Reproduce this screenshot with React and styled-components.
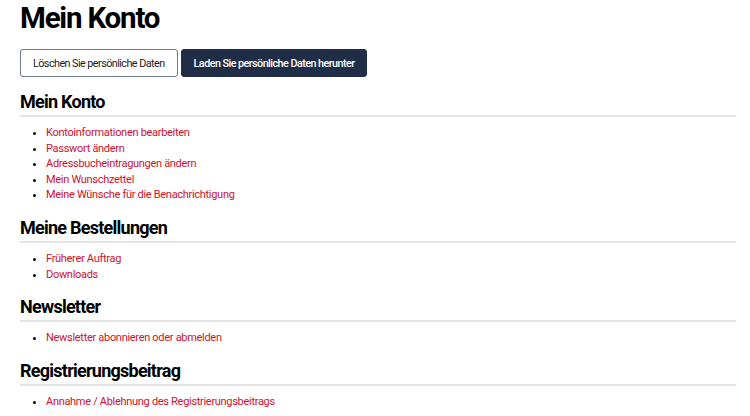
import React from "react";
import styled, { createGlobalStyle } from "styled-components";

const GlobalStyle = createGlobalStyle`
  body {
    margin: 0;
    background: #fff;
    font-family: Roboto, "Liberation Sans", sans-serif;
    color: #000;
  }
`;

const Page = styled.div`
  padding: 0 14px 0 20px;
`;

const PageTitle = styled.h1`
  font-size: 29.5px;
  line-height: 36px;
  font-weight: 700;
  margin: 0;
  letter-spacing: -1.2px;
`;

const Actions = styled.div`
  display: flex;
  gap: 3px;
  margin-top: 13px;
`;

const Button = styled.button`
  font-family: inherit;
  font-size: 10.8px;
  letter-spacing: -0.55px;
  height: 28px;
  padding: 0 12px;
  border-radius: 3px;
  cursor: pointer;
  border: 1px solid ${(p) => (p.$primary ? "#1f2d47" : "#6f7a8e")};
  background: ${(p) => (p.$primary ? "#1f2d47" : "#fff")};
  color: ${(p) => (p.$primary ? "#fff" : "#1a1a1a")};
  font-weight: ${(p) => (p.$primary ? 500 : 400)};
`;

const Section = styled.section`
  margin-top: ${(p) => (p.$first ? "14px" : "14px")};
`;

const SectionTitle = styled.h2`
  font-size: 18px;
  line-height: 22px;
  font-weight: 700;
  margin: 0;
  letter-spacing: -0.75px;
  padding-bottom: 2px;
  border-bottom: 2px solid #e4e4e4;
`;

const List = styled.ul`
  margin: 8px 0 0;
  padding-left: 26px;
`;

const Item = styled.li`
  font-size: 11px;
  line-height: 15.6px;
  letter-spacing: -0.3px;
`;

const Link = styled.a`
  color: #d0112b;
  text-decoration: none;
`;

const sections = [
  {
    title: "Mein Konto",
    links: [
      "Kontoinformationen bearbeiten",
      "Passwort ändern",
      "Adressbucheintragungen ändern",
      "Mein Wunschzettel",
      "Meine Wünsche für die Benachrichtigung",
    ],
  },
  { title: "Meine Bestellungen", links: ["Früherer Auftrag", "Downloads"] },
  { title: "Newsletter", links: ["Newsletter abonnieren oder abmelden"] },
  {
    title: "Registrierungsbeitrag",
    links: ["Annahme / Ablehnung des Registrierungsbeitrags"],
  },
];

export default function App() {
  return (
    <>
      <GlobalStyle />
      <Page>
        <PageTitle>Mein Konto</PageTitle>
        <Actions>
          <Button>Löschen Sie persönliche Daten</Button>
          <Button $primary>Laden Sie persönliche Daten herunter</Button>
        </Actions>
        {sections.map((s, i) => (
          <Section key={s.title} $first={i === 0}>
            <SectionTitle>{s.title}</SectionTitle>
            <List>
              {s.links.map((l) => (
                <Item key={l}>
                  <Link href="#">{l}</Link>
                </Item>
              ))}
            </List>
          </Section>
        ))}
      </Page>
    </>
  );
}
